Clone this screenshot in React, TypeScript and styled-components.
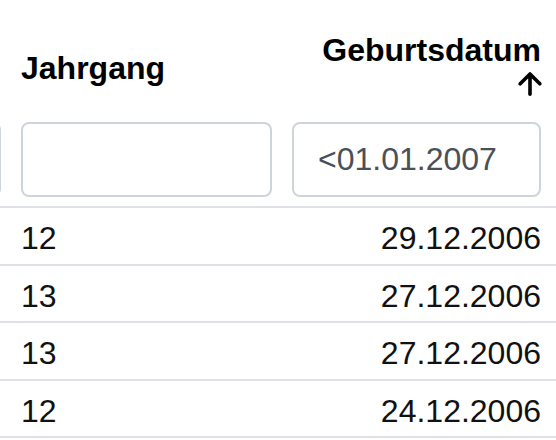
import React from "react";
import styled, { createGlobalStyle } from "styled-components";

const Global = createGlobalStyle`
  html, body {
    margin: 0;
    padding: 0;
    background: #ffffff;
    overflow: hidden;
  }
  body {
    font-family: "Liberation Sans", Arial, Helvetica, sans-serif;
    color: #111111;
  }
  * { box-sizing: border-box; }
`;

const Table = styled.div`
  display: flex;
  flex-direction: column;
  width: 940px;
  margin-left: -189px;
`;

const Row = styled.div<{ $border?: boolean }>`
  display: grid;
  grid-template-columns: 200px 271px 269px 200px;
  border-bottom: ${(p) => (p.$border ? "2px solid #dee2e6" : "none")};
`;

const HeadCell = styled.div<{ $align?: "left" | "right"; $top?: boolean }>`
  padding: 32px 10px 6px;
  font-size: 32px;
  line-height: 36px;
  font-weight: 700;
  color: #000000;
  text-align: ${(p) => p.$align ?? "left"};
  display: flex;
  flex-direction: column;
  justify-content: ${(p) => (p.$top ? "flex-start" : "center")};
  align-items: ${(p) => (p.$align === "right" ? "flex-end" : "flex-start")};
  min-height: 110px;
`;

const FilterCell = styled.div`
  padding: 12px 10px 9px;
`;

const FilterInput = styled.input`
  display: block;
  width: 100%;
  height: 75px;
  border: 2px solid #ced4da;
  border-radius: 8px;
  padding: 12px 24px;
  font-family: "Liberation Sans", Arial, Helvetica, sans-serif;
  font-size: 32px;
  line-height: 48px;
  color: #495057;
  background: #ffffff;
  outline: none;
`;

const DataCell = styled.div<{ $align?: "left" | "right" }>`
  padding: 12px 10px 7.5px;
  font-size: 32px;
  line-height: 36px;
  color: #111111;
  text-align: ${(p) => p.$align ?? "left"};
  white-space: nowrap;
`;

const SortArrow = styled.svg`
  display: block;
  width: 24px;
  height: 24px;
  margin-top: 4px;
  margin-right: -1px;
`;

const rows = [
  { jahrgang: "12", datum: "29.12.2006" },
  { jahrgang: "13", datum: "27.12.2006" },
  { jahrgang: "13", datum: "27.12.2006" },
  { jahrgang: "12", datum: "24.12.2006" },
];

export default function App() {
  return (
    <>
      <Global />
      <Table>
        <Row>
          <HeadCell />
          <HeadCell>Jahrgang</HeadCell>
          <HeadCell $align="right" $top>
            <span>Geburtsdatum</span>
            <SortArrow viewBox="0 0 24 24" aria-label="aufsteigend sortiert">
              <path
                d="M12 22.2 V2 M2.2 11.8 L12 2 L21.8 11.8"
                fill="none"
                stroke="#000000"
                strokeWidth="3.6"
                strokeLinecap="round"
                strokeLinejoin="round"
              />
            </SortArrow>
          </HeadCell>
          <HeadCell />
        </Row>
        <Row $border>
          <FilterCell>
            <FilterInput defaultValue="" />
          </FilterCell>
          <FilterCell>
            <FilterInput defaultValue="" />
          </FilterCell>
          <FilterCell>
            <FilterInput defaultValue="<01.01.2007" />
          </FilterCell>
          <FilterCell />
        </Row>
        {rows.map((r, i) => (
          <Row $border key={i}>
            <DataCell />
            <DataCell>{r.jahrgang}</DataCell>
            <DataCell $align="right">{r.datum}</DataCell>
            <DataCell />
          </Row>
        ))}
      </Table>
    </>
  );
}
